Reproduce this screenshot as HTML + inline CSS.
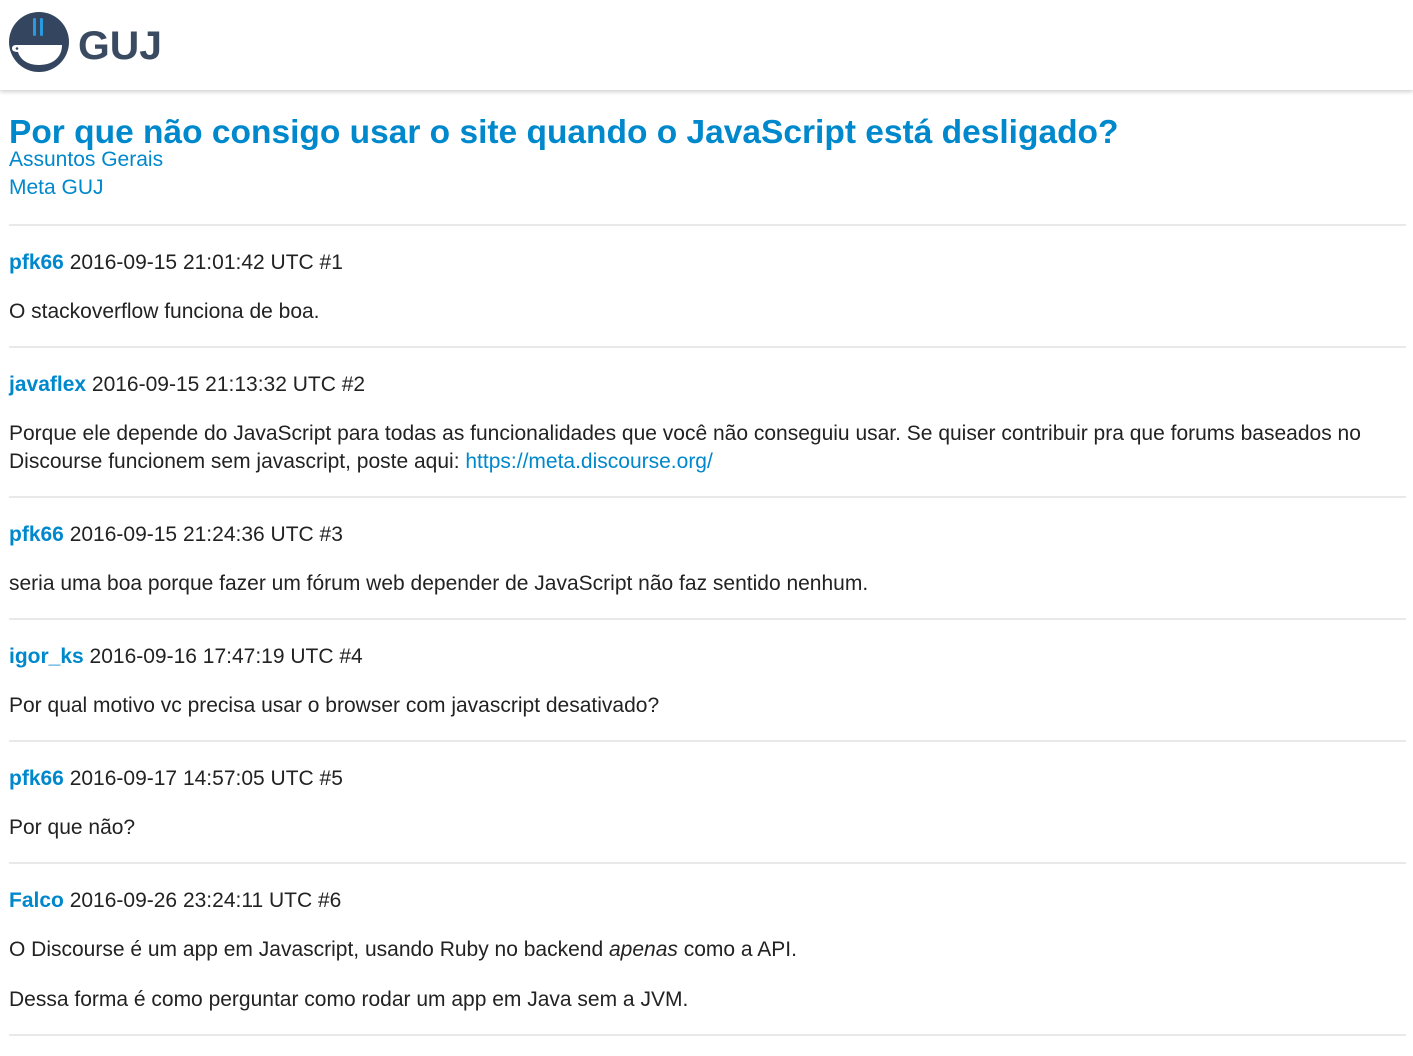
<!DOCTYPE html>
<html><head><meta charset="utf-8"><style>
body{margin:0;font-family:"Liberation Sans",sans-serif;color:#222;background:#fff;font-size:21px;}
.hdr{height:90px;box-shadow:0 2px 4px rgba(0,0,0,.18);position:relative;}
.wrap{padding:0 7px 0 9px;}
a{color:#0088cc;text-decoration:none}
h1{margin:0;padding-top:119px;font-size:33.5px;line-height:27px;color:#0088cc;font-weight:bold;margin-top:-90px;}
.cat{line-height:28px;}
.post{border-top:2px solid #e9e9e9;}
.meta{margin-top:23px;line-height:28px;}
.meta a{font-weight:bold}
p{margin:21px 0 20px;line-height:28px;}
p+p{margin-top:22px}
</style></head><body>
<div class="hdr">
<svg width="170" height="80" style="position:absolute;left:0;top:6px" viewBox="0 0 170 80">
<circle cx="39" cy="36" r="30" fill="#34465f"/>
<rect x="33" y="12" width="3" height="18" rx="1.5" fill="#2a9ae0"/>
<rect x="40" y="12" width="3" height="18" rx="1.5" fill="#2a9ae0"/>
<path d="M16 39 H62 C62 52 52 59 39 59 C27 59 20 53 18 46 Q12 46 12 42.5 Q12 39 16 39 Z" fill="#fff"/>
<circle cx="17" cy="42.5" r="1.3" fill="#34465f"/>
<text x="78" y="53" font-family="Liberation Sans, sans-serif" font-weight="bold" font-size="40" fill="#3a4a60" textLength="84" lengthAdjust="spacingAndGlyphs">GUJ</text>
</svg>
</div>
<div class="wrap">
<h1>Por que não consigo usar o site quando o JavaScript está desligado?</h1>
<div class="cat"><a>Assuntos Gerais</a></div>
<div class="cat"><a>Meta GUJ</a></div>
<div style="height:22px"></div>
<div class="post"><div class="meta"><a>pfk66</a> 2016-09-15 21:01:42 UTC #1</div><p>O stackoverflow funciona de boa.</p></div>
<div class="post"><div class="meta"><a>javaflex</a> 2016-09-15 21:13:32 UTC #2</div><p>Porque ele depende do JavaScript para todas as funcionalidades que você não conseguiu usar. Se quiser contribuir pra que forums baseados no Discourse funcionem sem javascript, poste aqui: <a>https://meta.discourse.org/</a></p></div>
<div class="post"><div class="meta"><a>pfk66</a> 2016-09-15 21:24:36 UTC #3</div><p>seria uma boa porque fazer um fórum web depender de JavaScript não faz sentido nenhum.</p></div>
<div class="post"><div class="meta"><a>igor_ks</a> 2016-09-16 17:47:19 UTC #4</div><p>Por qual motivo vc precisa usar o browser com javascript desativado?</p></div>
<div class="post"><div class="meta"><a>pfk66</a> 2016-09-17 14:57:05 UTC #5</div><p>Por que não?</p></div>
<div class="post"><div class="meta"><a>Falco</a> 2016-09-26 23:24:11 UTC #6</div><p>O Discourse é um app em Javascript, usando Ruby no backend <i>apenas</i> como a API.</p><p>Dessa forma é como perguntar como rodar um app em Java sem a JVM.</p></div>
<div class="post" style="height:20px"></div>
</div>
</body></html>
